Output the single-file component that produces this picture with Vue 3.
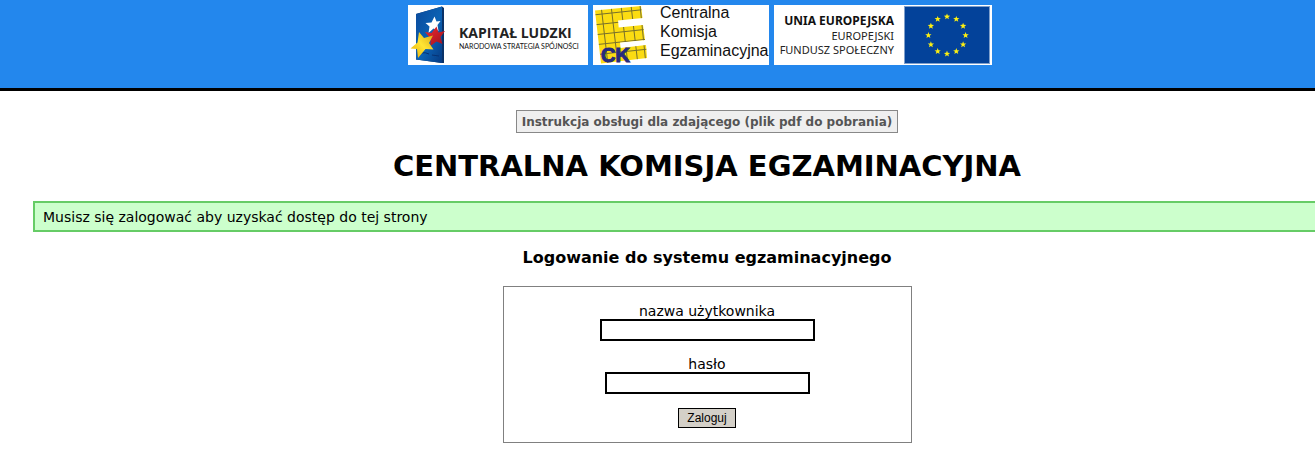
<script setup>
import { ref } from 'vue'

const username = ref('')
const password = ref('')

function starPoints(cx, cy, outer, inner, turn = 0) {
  return Array.from({ length: 10 }, (_, i) => {
    const r = i % 2 ? inner : outer
    const a = ((i * 36 - 90 + turn) * Math.PI) / 180
    return `${(cx + r * Math.cos(a)).toFixed(2)},${(cy + r * Math.sin(a)).toFixed(2)}`
  }).join(' ')
}

const euStars = Array.from({ length: 12 }, (_, i) => {
  const a = (i * Math.PI) / 6
  return starPoints(173 + 18.6 * Math.sin(a), 30.3 - 18.6 * Math.cos(a), 3.3, 1.4)
})
</script>

<template>
  <div class="page">
    <header class="banner">
      <svg class="logo" width="180" height="60" viewBox="0 0 180 60" role="img" aria-label="Kapitał Ludzki">
        <defs>
          <linearGradient id="panel" x1="0" y1="0" x2="1" y2="1">
            <stop offset="0" stop-color="#0a4a9c" />
            <stop offset="0.55" stop-color="#0c62b4" />
            <stop offset="1" stop-color="#063a82" />
          </linearGradient>
          <linearGradient id="gold" x1="0" y1="1" x2="1" y2="0">
            <stop offset="0" stop-color="#e8a800" />
            <stop offset="0.5" stop-color="#ffe534" />
            <stop offset="1" stop-color="#d9a514" />
          </linearGradient>
          <linearGradient id="ruby" x1="0" y1="0" x2="1" y2="1">
            <stop offset="0" stop-color="#ee2b30" />
            <stop offset="1" stop-color="#9c0f1c" />
          </linearGradient>
        </defs>
        <rect width="180" height="60" fill="#fff" />
        <path d="M8 9 34 1.500l2 1.500v55H34L8 54.500z" fill="#0a3268" />
        <path d="M8 9 34 1.500v56.500L8 54.500z" fill="url(#panel)" />
        <path d="M12 48q6-1 9 1M24 50l7 1" fill="none" stroke="#073273" stroke-width="1" />
        <path d="M17.500 18l6-.5 3-6 2 5 4-.5-3 4 1 6-5-2.500-5 4.500 1-6.500z" fill="#fff" />
        <path d="M17 27l6.500 1 5-6.500 2 6 6.500-1.500-4.500 6 2 7-6-2.500-6 4.500v-7.500z" fill="url(#ruby)" />
        <path d="M11 27 16 33l9-2.500-4 7.500 4.500 6.500-8-.5L10 53l-1-9-6.500-.5 7-6z" fill="url(#gold)" />
        <text x="51" y="33" class="condensed-bold">KAPITAŁ LUDZKI</text>
        <text x="51" y="44" class="subline">NARODOWA STRATEGIA SPÓJNOŚCI</text>
      </svg>
      <svg class="logo" width="176" height="60" viewBox="0 0 176 60" role="img" aria-label="Centralna Komisja Egzaminacyjna">
        <defs>
          <clipPath id="letter-shape">
            <path d="M2 5.500 48 1l1.500 12L25 15.500l.7 7L50 20l2 15-25 2.500.6 5.500L53 40l1 13-46 5.500z" />
          </clipPath>
        </defs>
        <rect width="176" height="60" fill="#fff" />
        <g clip-path="url(#letter-shape)">
          <rect width="56" height="60" fill="#fbdc12" />
          <path
            d="M0 10l56-6M0 20l56-6M0 30l56-6M0 40l56-6M0 50l56-6M8 0l7 60M18 0l7 60M28 0l7 60M38 0l7 60M47 0l6 60"
            fill="none"
            stroke="#77702c"
            stroke-width="1"
          />
        </g>
        <text x="8" y="57" class="monogram">CK</text>
        <text x="67" y="13" class="institution">Centralna</text>
        <text x="67" y="32" class="institution">Komisja</text>
        <text x="67" y="51" class="institution">Egzaminacyjna</text>
      </svg>
      <svg class="logo" width="218" height="60" viewBox="0 0 218 60" role="img" aria-label="Unia Europejska">
        <rect width="218" height="60" fill="#fff" />
        <text x="120" y="20" class="union strong">UNIA EUROPEJSKA</text>
        <text x="120" y="35" class="union">EUROPEJSKI</text>
        <text x="120" y="49" class="union">FUNDUSZ SPOŁECZNY</text>
        <rect x="130" y="1" width="86" height="58" fill="#7f9fcb" />
        <rect x="131" y="2" width="84" height="56" fill="#03429a" />
        <polygon v-for="points in euStars" :key="points" :points="points" fill="#fdf012" />
      </svg>
    </header>

    <main class="content">
      <a class="manual" href="#instrukcja">Instrukcja obsługi dla zdającego (plik pdf do pobrania)</a>
      <h1>CENTRALNA KOMISJA EGZAMINACYJNA</h1>
      <p class="notice">Musisz się zalogować aby uzyskać dostęp do tej strony</p>
      <h2>Logowanie do systemu egzaminacyjnego</h2>
      <form class="login" @submit.prevent>
        <div class="field">
          <label for="username">nazwa użytkownika</label>
          <input id="username" v-model="username" type="text" class="wide" />
        </div>
        <div class="field">
          <label for="password">hasło</label>
          <input id="password" v-model="password" type="password" />
        </div>
        <button type="submit">Zaloguj</button>
      </form>
    </main>
  </div>
</template>

<style>
body {
  margin: 0;
  background: #fff;
}
</style>

<style scoped>
.page {
  overflow: hidden;
  color: #000;
  font: 14px/16px Verdana, "DejaVu Sans", sans-serif;
}

.banner {
  display: flex;
  justify-content: center;
  gap: 5px;
  margin-right: -85px;
  padding: 5px 0 23px;
  border-bottom: 3px solid #000;
  background: #2387ed;
}

.logo {
  display: block;
  flex: none;
}

.condensed-bold {
  font: 700 14px "Open Sans", sans-serif;
  fill: #222;
}

.subline {
  font: 7px Lato, sans-serif;
  fill: #111;
}

.monogram {
  font: 700 20px "Liberation Sans", sans-serif;
  fill: #262a7c;
  stroke: #262a7c;
  stroke-width: 1px;
}

.institution {
  font: 16px "Liberation Sans", sans-serif;
  fill: #111;
}

.union {
  font: 11px "Noto Sans", sans-serif;
  text-anchor: end;
  fill: #222;
}

.union.strong {
  font-size: 12px;
  font-weight: 700;
  fill: #111;
}

.content {
  display: flex;
  flex-direction: column;
  align-items: center;
  margin: 0 -66px 0 33px;
  padding: 19px 0 17px;
}

.manual {
  padding: 4px 5px 3px;
  border: 1px solid #888;
  background: #efefef;
  color: #555;
  font-size: 12px;
  font-weight: 700;
  line-height: 14px;
  text-decoration: none;
}

h1 {
  margin: 16px 0 18px;
  font-size: 29px;
  line-height: 34px;
}

.notice {
  align-self: stretch;
  margin: 0;
  padding: 6px 8px 5px;
  border: 2px solid #66cc66;
  background: #ccffcc;
}

h2 {
  margin: 16px 0 18px;
  font-size: 16px;
  line-height: 20px;
}

.login {
  display: flex;
  flex-direction: column;
  align-items: center;
  gap: 14px;
  box-sizing: border-box;
  width: 409px;
  max-width: 100%;
  padding: 15px 15px 14px;
  border: 1px solid #808080;
}

.field {
  display: flex;
  flex-direction: column;
  align-items: center;
}

label {
  padding-top: 1px;
}

input {
  box-sizing: border-box;
  width: 205px;
  height: 22px;
  padding: 1px 2px;
  border: 2px solid #000;
  border-radius: 0;
  background: #fff;
  font: inherit;
}

input.wide {
  width: 215px;
}

button {
  height: 20px;
  padding: 0 8px;
  border: 1px solid #000;
  border-radius: 0;
  background: #d4d0c8;
  color: #000;
  font: 12px "Liberation Sans", Arial, sans-serif;
}
</style>
